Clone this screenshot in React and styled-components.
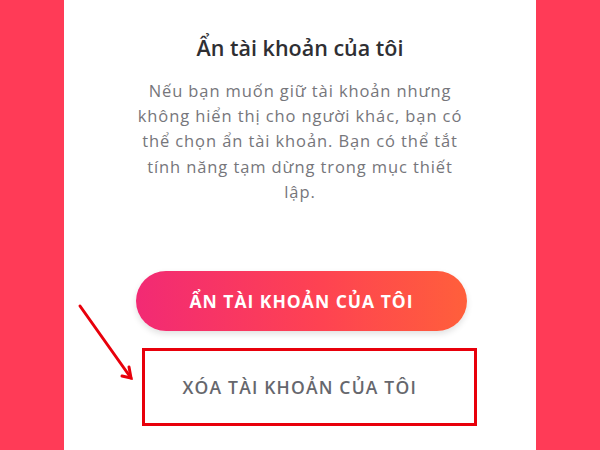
import styled, { createGlobalStyle } from "styled-components";

const GlobalStyle = createGlobalStyle`
  html, body {
    margin: 0;
    padding: 0;
    background: #ff3b57;
  }
  * {
    box-sizing: border-box;
  }
`;

const Page = styled.div`
  width: 600px;
  height: 450px;
  display: flex;
  justify-content: center;
  background: #ff3b57;
  overflow: hidden;
`;

const Sheet = styled.div`
  position: relative;
  width: 472px;
  height: 100%;
  background: #ffffff;
  display: flex;
  flex-direction: column;
  align-items: center;
  padding-top: 33px;
  font-family: "Open Sans", "Noto Sans", sans-serif;
`;

const Title = styled.h1`
  margin: 0;
  font-size: 21.5px;
  font-weight: 600;
  color: #2f2f33;
  line-height: 30px;
`;

const Description = styled.p`
  margin: 15px 0 0;
  font-size: 16.5px;
  line-height: 25.2px;
  color: #76767b;
  text-align: center;
  letter-spacing: 0.9px;
`;

const Actions = styled.div`
  margin-top: 67px;
  display: flex;
  flex-direction: column;
  align-items: center;
  gap: 17px;
`;

const HideButton = styled.button`
  width: 331px;
  height: 60px;
  border: none;
  border-radius: 30px;
  background: linear-gradient(90deg, #f22a74 0%, #fe4252 55%, #ff5f3b 100%);
  box-shadow: 0 3px 6px rgba(0, 0, 0, 0.12);
  color: #ffffff;
  font-family: inherit;
  font-size: 17.5px;
  font-weight: 700;
  letter-spacing: 1px;
  margin-left: 3px;
`;

const Highlight = styled.div`
  width: 335px;
  height: 78px;
  margin-left: 18px;
  border: 3px solid #e8000b;
  display: flex;
  align-items: center;
  padding-left: 38px;
`;

const DeleteButton = styled.button`
  border: none;
  background: transparent;
  padding: 0;
  color: #66676d;
  font-family: inherit;
  font-size: 17.5px;
  font-weight: 600;
  letter-spacing: 1.2px;
`;

const Arrow = styled.svg`
  position: absolute;
  left: 10px;
  top: 300px;
`;

export default function App() {
  return (
    <>
      <GlobalStyle />
      <Page>
        <Sheet>
          <Title>Ẩn tài khoản của tôi</Title>
          <Description>
            Nếu bạn muốn giữ tài khoản nhưng
            <br />
            không hiển thị cho người khác, bạn có
            <br />
            thể chọn ẩn tài khoản. Bạn có thể tắt
            <br />
            tính năng tạm dừng trong mục thiết
            <br />
            lập.
          </Description>
          <Actions>
            <HideButton>ẨN TÀI KHOẢN CỦA TÔI</HideButton>
            <Highlight>
              <DeleteButton>XÓA TÀI KHOẢN CỦA TÔI</DeleteButton>
            </Highlight>
          </Actions>
          <Arrow width="70" height="90" viewBox="0 0 70 90">
            <g stroke="#e8000b" strokeWidth="3" strokeLinecap="round" fill="none">
              <line x1="6" y1="6" x2="57" y2="78" />
              <polyline points="48,76 57,78 55,67" />
            </g>
          </Arrow>
        </Sheet>
      </Page>
    </>
  );
}
